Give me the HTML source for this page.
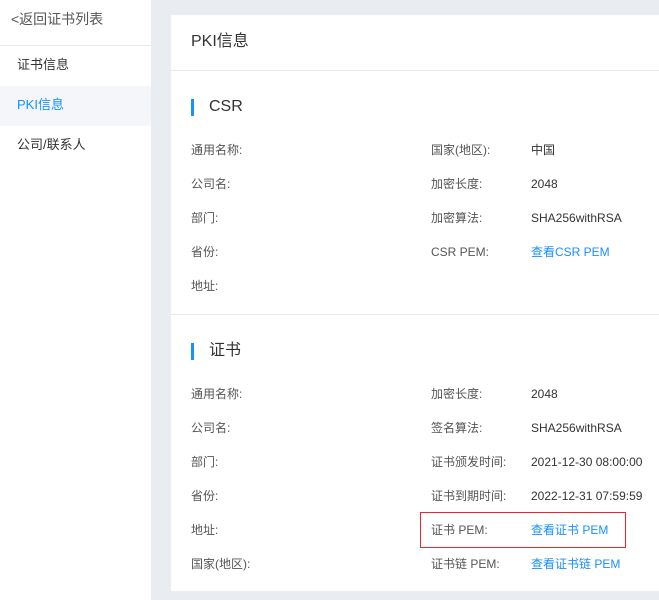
<!DOCTYPE html><html><head><meta charset="utf-8"><style>
*{margin:0;padding:0;box-sizing:border-box}
body{width:659px;height:600px;overflow:hidden;background:#e9edf2;font-family:"Liberation Sans","Noto Sans CJK SC",sans-serif;position:relative;color:#333}
.side{position:absolute;left:0;top:0;width:151px;height:600px;background:#fff}
.t{position:absolute;white-space:nowrap;font-size:12px;line-height:14px}
.card{position:absolute;left:171px;top:15px;width:488px;height:576px;background:#fff}
.lb{color:#555}
.bl{color:#1890ff}
</style></head><body>
<div class="side">
<div class="t" style="left:11px;top:11px;font-size:14px;line-height:16px;color:#555">&lt;返回证书列表</div>
<div style="position:absolute;left:0;top:45px;width:151px;height:1px;background:#e8e8e8"></div>
<div class="t" style="left:17px;top:58px;font-size:13px">证书信息</div>
<div style="position:absolute;left:0;top:86px;width:151px;height:40px;background:#f4f6f9"></div>
<div class="t bl" style="left:17px;top:98px;font-size:13px">PKI信息</div>
<div class="t" style="left:17px;top:138px;font-size:13px">公司/联系人</div>
</div>
<div class="card">
<div class="t" style="left:20px;top:18px;font-size:16px;line-height:18px">PKI信息</div>
<div style="position:absolute;left:0;top:55px;width:488px;height:1px;background:#e8e8e8"></div>
<div style="position:absolute;left:20px;top:84px;width:3px;height:17px;background:#1890ff"></div>
<div class="t" style="left:38px;top:83px;font-size:16px;line-height:18px">CSR</div>
<div style="position:absolute;left:0;top:299px;width:488px;height:1px;background:#e8e8e8"></div>
<div style="position:absolute;left:20px;top:328px;width:3px;height:17px;background:#1890ff"></div>
<div class="t" style="left:38px;top:327px;font-size:16px;line-height:18px">证书</div>
<div style="position:absolute;left:249px;top:497px;width:206px;height:36px;border:1px solid #f5222d"></div>
</div>
<div class="t lb" style="left:191px;top:143px">通用名称:</div><div class="t lb" style="left:431px;top:143px">国家(地区):</div><div class="t" style="left:531px;top:143px">中国</div>
<div class="t lb" style="left:191px;top:177px">公司名:</div><div class="t lb" style="left:431px;top:177px">加密长度:</div><div class="t" style="left:531px;top:177px">2048</div>
<div class="t lb" style="left:191px;top:211px">部门:</div><div class="t lb" style="left:431px;top:211px">加密算法:</div><div class="t" style="left:531px;top:211px">SHA256withRSA</div>
<div class="t lb" style="left:191px;top:245px">省份:</div><div class="t lb" style="left:431px;top:245px">CSR PEM:</div><div class="t bl" style="left:531px;top:245px">查看CSR PEM</div>
<div class="t lb" style="left:191px;top:279px">地址:</div>
<div class="t lb" style="left:191px;top:387px">通用名称:</div><div class="t lb" style="left:431px;top:387px">加密长度:</div><div class="t" style="left:531px;top:387px">2048</div>
<div class="t lb" style="left:191px;top:421px">公司名:</div><div class="t lb" style="left:431px;top:421px">签名算法:</div><div class="t" style="left:531px;top:421px">SHA256withRSA</div>
<div class="t lb" style="left:191px;top:455px">部门:</div><div class="t lb" style="left:431px;top:455px">证书颁发时间:</div><div class="t" style="left:531px;top:455px">2021-12-30 08:00:00</div>
<div class="t lb" style="left:191px;top:489px">省份:</div><div class="t lb" style="left:431px;top:489px">证书到期时间:</div><div class="t" style="left:531px;top:489px">2022-12-31 07:59:59</div>
<div class="t lb" style="left:191px;top:523px">地址:</div><div class="t lb" style="left:431px;top:523px">证书 PEM:</div><div class="t bl" style="left:531px;top:523px">查看证书 PEM</div>
<div class="t lb" style="left:191px;top:557px">国家(地区):</div><div class="t lb" style="left:431px;top:557px">证书链 PEM:</div><div class="t bl" style="left:531px;top:557px">查看证书链 PEM</div>
</body></html>
